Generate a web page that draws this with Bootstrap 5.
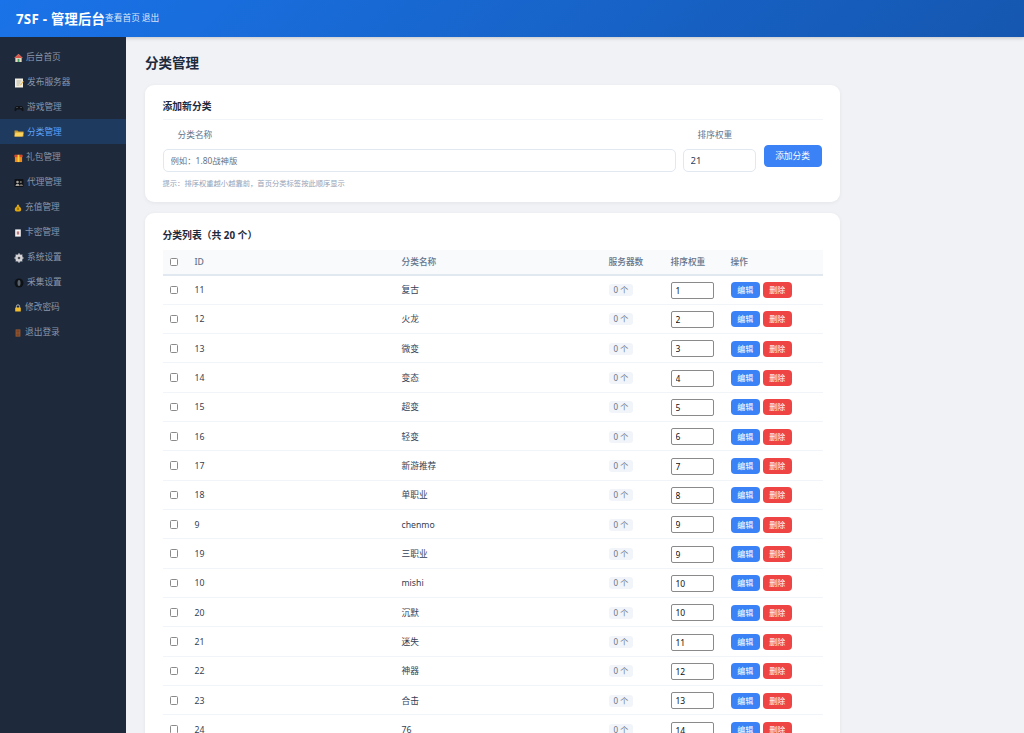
<!DOCTYPE html>
<html lang="zh-CN">
<head>
<meta charset="utf-8">
<title>分类管理</title>
<link href="https://cdn.jsdelivr.net/npm/bootstrap@5.3.0/dist/css/bootstrap.min.css" rel="stylesheet">
<style>
html,body{height:100%;overflow:hidden}
body{font-family:"Noto Sans","Noto Sans CJK SC",sans-serif;background:#f0f2f5;color:#334155;font-size:8.7px}
.top-bar{height:37px;background:linear-gradient(135deg,#1a73e8,#1557b0);color:#fff;padding:1px 16px 0;box-shadow:0 1px 4px rgba(0,0,0,.2);flex:none}
.top-brand{font-size:13.3px;font-weight:700;line-height:36px;letter-spacing:.25px}
.top-link{color:rgba(255,255,255,.85);font-size:8.7px;text-decoration:none;margin-right:2px}
.shell{flex:1;min-height:0}
.side-bar{width:126px;flex:none;background:#1e293b;padding-top:7px}
.side-item{height:25px;padding:2px 0 0 14px;color:#8b98ab;font-size:8.7px;text-decoration:none;gap:3px}
.side-item svg{width:9px;height:10px;flex:none}
.side-item svg.ic-w{width:10px}
.side-item svg.ic-n{width:8px}
.side-item.is-on{background:#1e3a5f;color:#60a5fa}
.main-pane{flex:1;padding:16px 0 0 19px;overflow:hidden;min-width:0}
.pane-title{font-size:13.5px;font-weight:700;color:#1e293b;line-height:20px;margin:0 0 12px}
.panel{width:694.5px;background:#fff;border-radius:9px;box-shadow:0 1px 4px rgba(0,0,0,.06);padding:14px 17px 14px 17.5px;margin-bottom:11px}
.panel-h{font-size:9.8px;font-weight:700;color:#1e293b;line-height:14px}
.add-h{padding:1px 0 5px;border-bottom:1px solid #f1f5f9;margin-bottom:9px}
.list-h{padding-top:2px}
.field-l{font-size:8.7px;color:#64748b;line-height:12px;margin-bottom:8px;padding-left:15px}
.name-f{width:513px}
.num-f{width:73px;margin-left:-1px}
.form-box{height:23px;border:1px solid #e2e8f0;border-radius:5px;font-size:8.4px;padding:0 7px;color:#334155;box-shadow:none;min-height:0}
.form-box::placeholder{color:#6b7280}
.num-box{font-size:9.5px}
.add-btn{width:58px;height:22px;background:#3b82f6;border:1px solid #3b82f6;border-radius:4px;color:#fff;font-size:8.7px;padding:2px 0 0;margin-bottom:5px}
.hint{font-size:7.3px;color:#94a3b8;line-height:10px;margin-top:6px}
.cat-table{table-layout:fixed;width:660px;margin:7px 0 0;font-size:8.7px;--bs-table-bg:transparent;color:#334155}
.cat-table th{height:25px;background:#f8fafc;color:#64748b;font-weight:500;font-size:8.7px;border-bottom:2px solid #e2e8f0;padding:0 7px;vertical-align:middle}
.cat-table td{height:29.33px;padding:0 7px;border-bottom:1px solid #f1f5f9;vertical-align:middle;color:#334155}
.cat-table th:nth-child(n+2),.cat-table td:nth-child(2),.cat-table td:nth-child(3){padding-top:2px}
.cat-table td:nth-child(4),.cat-table td:nth-child(5){padding-top:1px}
.w-a{width:25px}.w-b{width:207px}.w-c{width:207px}.w-d{width:62px}.w-e{width:60px}.w-f{width:99px}
.chk{width:8.5px;height:8.5px;margin:0;display:block;border:1px solid #8a8a8a;border-radius:1.5px;appearance:none;background:#fff}
.count-tag{display:inline-block;background:#f1f5f9;color:#64748b;font-size:8px;line-height:12px;padding:0 5px;border-radius:3px;margin-top:1px}
.sort-in{display:block;width:43px;height:17px;border:1px solid #8a8a8a;border-radius:2px;font-size:8.5px;padding:0 4px;color:#111;background:#fff}
.act{height:16px;width:29.5px;border:0;border-radius:4px;color:#fff;font-size:8px;padding:0;line-height:16px;margin-right:2.5px;margin-top:1px}
.act-e{background:#3b82f6}.act-d{background:#ef4444}
</style>
</head>
<body class="d-flex flex-column">
<svg width="0" height="0" class="position-absolute">
<symbol id="i-home" viewBox="0 0 10 10"><path d="M5 .5 9.600 5H8.500v4.500h-7V5H.4z" fill="#e8d9c0"/><path d="M5 .5 9.600 5H.4z" fill="#d9574a"/><rect x="4" y="6" width="2" height="3.500" fill="#3fa06a"/></symbol>
<symbol id="i-memo" viewBox="0 0 10 10"><rect x="1" y=".5" width="8" height="9" fill="#f3efe2"/><path d="M2.500 3h5M2.500 5h4M2.500 7h3" stroke="#9a9a8e" stroke-width=".7"/><path d="m6 7 3-4 .8.6-3 4z" fill="#e8b43c"/></symbol>
<symbol id="i-pad" viewBox="0 0 10 10"><path d="M2.500 3h5c1.300 0 2 2.500 2 4 0 1.500-1.300 1.500-2 .3L7 6.500H3l-.5.8C1.800 8.500.5 8.500.5 7c0-1.500.7-4 2-4z" fill="#101418"/><circle cx="7" cy="4.500" r=".6" fill="#7b828c"/><circle cx="3" cy="4.500" r=".6" fill="#7b828c"/></symbol>
<symbol id="i-folder" viewBox="0 0 10 10"><path d="M.5 2.500h3l1 1h5v5h-9z" fill="#c99a2e"/><path d="M1.500 4.500h8l-1 4h-8z" fill="#fbd35c"/></symbol>
<symbol id="i-gift" viewBox="0 0 10 10"><rect x="1" y="1.500" width="8" height="8" fill="#f08a1e"/><rect x=".5" y="1.500" width="9" height="2.500" fill="#d9452e"/><rect x="4" y="1.500" width="2" height="8" fill="#f5d142"/></symbol>
<symbol id="i-agent" viewBox="0 0 10 10"><rect x=".5" y="1" width="9" height="8" rx="1" fill="#0e1216"/><circle cx="3.500" cy="4" r="1.300" fill="#a8a29e"/><path d="M1.500 8c0-3 4-3 4 0z" fill="#a8a29e"/><circle cx="6.800" cy="4" r="1.100" fill="#78716c"/><path d="M5.500 8c0-2.500 3.500-2.500 3.500 0z" fill="#78716c"/></symbol>
<symbol id="i-money" viewBox="0 0 10 10"><path d="M3.500.8h3L6 2.800c2 .8 3 2.700 3 4C9 9 7.500 9.500 5 9.500S1 9 1 6.800c0-1.300 1-3.200 3-4z" fill="#e0a810"/><rect x="4.300" y="4.500" width="1.400" height="3" fill="#7a5c08"/></symbol>
<symbol id="i-card" viewBox="0 0 10 10"><rect x="1.500" y=".5" width="7" height="9" fill="#f4f4f5"/><rect x="3.500" y="3" width="3" height="4" fill="#d77a6a"/><rect x="4.500" y="4" width="1" height="2" fill="#5c7cc4"/></symbol>
<symbol id="i-gear" viewBox="0 0 10 10"><path d="M5 .3v9.400M.3 5h9.400M1.700 1.700l6.600 6.600M8.300 1.700 1.700 8.300" stroke="#d4d4d8" stroke-width="1.200"/><circle cx="5" cy="5" r="3.700" fill="#d4d4d8"/><circle cx="5" cy="5" r="1.300" fill="#52525b"/></symbol>
<symbol id="i-spider" viewBox="0 0 10 10"><circle cx="5" cy="5" r="4.500" fill="#0e1216"/><ellipse cx="5" cy="5" rx="1.500" ry="3" fill="#5b636e"/></symbol>
<symbol id="i-lock" viewBox="0 0 10 10"><path d="M3 5V3a2 2 0 0 1 4 0v2" fill="none" stroke="#c4c4c8" stroke-width="1.100"/><rect x="1.500" y="4.500" width="7" height="5" rx=".5" fill="#f2bd2c"/></symbol>
<symbol id="i-door" viewBox="0 0 10 10"><rect x="2" y=".5" width="6" height="9" fill="#9a5a32"/><rect x="3" y="1.500" width="4" height="3" fill="#7a4526"/><rect x="3" y="5.500" width="4" height="3" fill="#7a4526"/></symbol>
</svg>

<header class="top-bar d-flex align-items-center">
  <span class="top-brand">7SF - 管理后台</span>
  <a class="top-link" href="#">查看首页</a><a class="top-link" href="#">退出</a>
</header>

<div class="shell d-flex">
  <nav class="side-bar d-flex flex-column">
    <a class="side-item d-flex align-items-center" href="#"><svg><use href="#i-home"/></svg>后台首页</a>
    <a class="side-item d-flex align-items-center" href="#"><svg class="ic-w"><use href="#i-memo"/></svg>发布服务器</a>
    <a class="side-item d-flex align-items-center" href="#"><svg class="ic-w"><use href="#i-pad"/></svg>游戏管理</a>
    <a class="side-item is-on d-flex align-items-center" href="#"><svg class="ic-w"><use href="#i-folder"/></svg>分类管理</a>
    <a class="side-item d-flex align-items-center" href="#"><svg><use href="#i-gift"/></svg>礼包管理</a>
    <a class="side-item d-flex align-items-center" href="#"><svg class="ic-w"><use href="#i-agent"/></svg>代理管理</a>
    <a class="side-item d-flex align-items-center" href="#"><svg class="ic-n"><use href="#i-money"/></svg>充值管理</a>
    <a class="side-item d-flex align-items-center" href="#"><svg class="ic-n"><use href="#i-card"/></svg>卡密管理</a>
    <a class="side-item d-flex align-items-center" href="#"><svg class="ic-w"><use href="#i-gear"/></svg>系统设置</a>
    <a class="side-item d-flex align-items-center" href="#"><svg class="ic-w"><use href="#i-spider"/></svg>采集设置</a>
    <a class="side-item d-flex align-items-center" href="#"><svg class="ic-n"><use href="#i-lock"/></svg>修改密码</a>
    <a class="side-item d-flex align-items-center" href="#"><svg class="ic-n"><use href="#i-door"/></svg>退出登录</a>
  </nav>

  <main class="main-pane">
    <h1 class="pane-title">分类管理</h1>

    <section class="panel">
      <div class="panel-h add-h">添加新分类</div>
      <form class="d-flex align-items-end gap-2">
        <div class="name-f"><div class="field-l">分类名称</div><input class="form-control form-box" placeholder="例如：1.80战神版"></div>
        <div class="num-f"><div class="field-l">排序权重</div><input class="form-control form-box num-box" value="21"></div>
        <button type="button" class="btn add-btn">添加分类</button>
      </form>
      <div class="hint">提示：排序权重越小越靠前，首页分类标签按此顺序显示</div>
    </section>

    <section class="panel">
      <div class="panel-h list-h">分类列表（共 20 个）</div>
      <table class="table cat-table">
        <colgroup><col class="w-a"><col class="w-b"><col class="w-c"><col class="w-d"><col class="w-e"><col class="w-f"></colgroup>
        <thead><tr><th><input type="checkbox" class="chk"></th><th>ID</th><th>分类名称</th><th>服务器数</th><th>排序权重</th><th>操作</th></tr></thead>
        <tbody>
          <tr><td><input type="checkbox" class="chk"></td><td>11</td><td>复古</td><td><span class="count-tag">0 个</span></td><td><input class="sort-in" value="1"></td><td><button class="act act-e">编辑</button><button class="act act-d">删除</button></td></tr>
          <tr><td><input type="checkbox" class="chk"></td><td>12</td><td>火龙</td><td><span class="count-tag">0 个</span></td><td><input class="sort-in" value="2"></td><td><button class="act act-e">编辑</button><button class="act act-d">删除</button></td></tr>
          <tr><td><input type="checkbox" class="chk"></td><td>13</td><td>微变</td><td><span class="count-tag">0 个</span></td><td><input class="sort-in" value="3"></td><td><button class="act act-e">编辑</button><button class="act act-d">删除</button></td></tr>
          <tr><td><input type="checkbox" class="chk"></td><td>14</td><td>变态</td><td><span class="count-tag">0 个</span></td><td><input class="sort-in" value="4"></td><td><button class="act act-e">编辑</button><button class="act act-d">删除</button></td></tr>
          <tr><td><input type="checkbox" class="chk"></td><td>15</td><td>超变</td><td><span class="count-tag">0 个</span></td><td><input class="sort-in" value="5"></td><td><button class="act act-e">编辑</button><button class="act act-d">删除</button></td></tr>
          <tr><td><input type="checkbox" class="chk"></td><td>16</td><td>轻变</td><td><span class="count-tag">0 个</span></td><td><input class="sort-in" value="6"></td><td><button class="act act-e">编辑</button><button class="act act-d">删除</button></td></tr>
          <tr><td><input type="checkbox" class="chk"></td><td>17</td><td>新游推荐</td><td><span class="count-tag">0 个</span></td><td><input class="sort-in" value="7"></td><td><button class="act act-e">编辑</button><button class="act act-d">删除</button></td></tr>
          <tr><td><input type="checkbox" class="chk"></td><td>18</td><td>单职业</td><td><span class="count-tag">0 个</span></td><td><input class="sort-in" value="8"></td><td><button class="act act-e">编辑</button><button class="act act-d">删除</button></td></tr>
          <tr><td><input type="checkbox" class="chk"></td><td>9</td><td>chenmo</td><td><span class="count-tag">0 个</span></td><td><input class="sort-in" value="9"></td><td><button class="act act-e">编辑</button><button class="act act-d">删除</button></td></tr>
          <tr><td><input type="checkbox" class="chk"></td><td>19</td><td>三职业</td><td><span class="count-tag">0 个</span></td><td><input class="sort-in" value="9"></td><td><button class="act act-e">编辑</button><button class="act act-d">删除</button></td></tr>
          <tr><td><input type="checkbox" class="chk"></td><td>10</td><td>mishi</td><td><span class="count-tag">0 个</span></td><td><input class="sort-in" value="10"></td><td><button class="act act-e">编辑</button><button class="act act-d">删除</button></td></tr>
          <tr><td><input type="checkbox" class="chk"></td><td>20</td><td>沉默</td><td><span class="count-tag">0 个</span></td><td><input class="sort-in" value="10"></td><td><button class="act act-e">编辑</button><button class="act act-d">删除</button></td></tr>
          <tr><td><input type="checkbox" class="chk"></td><td>21</td><td>迷失</td><td><span class="count-tag">0 个</span></td><td><input class="sort-in" value="11"></td><td><button class="act act-e">编辑</button><button class="act act-d">删除</button></td></tr>
          <tr><td><input type="checkbox" class="chk"></td><td>22</td><td>神器</td><td><span class="count-tag">0 个</span></td><td><input class="sort-in" value="12"></td><td><button class="act act-e">编辑</button><button class="act act-d">删除</button></td></tr>
          <tr><td><input type="checkbox" class="chk"></td><td>23</td><td>合击</td><td><span class="count-tag">0 个</span></td><td><input class="sort-in" value="13"></td><td><button class="act act-e">编辑</button><button class="act act-d">删除</button></td></tr>
          <tr><td><input type="checkbox" class="chk"></td><td>24</td><td>76</td><td><span class="count-tag">0 个</span></td><td><input class="sort-in" value="14"></td><td><button class="act act-e">编辑</button><button class="act act-d">删除</button></td></tr>
        </tbody>
      </table>
    </section>
  </main>
</div>
<script src="https://cdn.jsdelivr.net/npm/bootstrap@5.3.0/dist/js/bootstrap.bundle.min.js"></script>
</body>
</html>
